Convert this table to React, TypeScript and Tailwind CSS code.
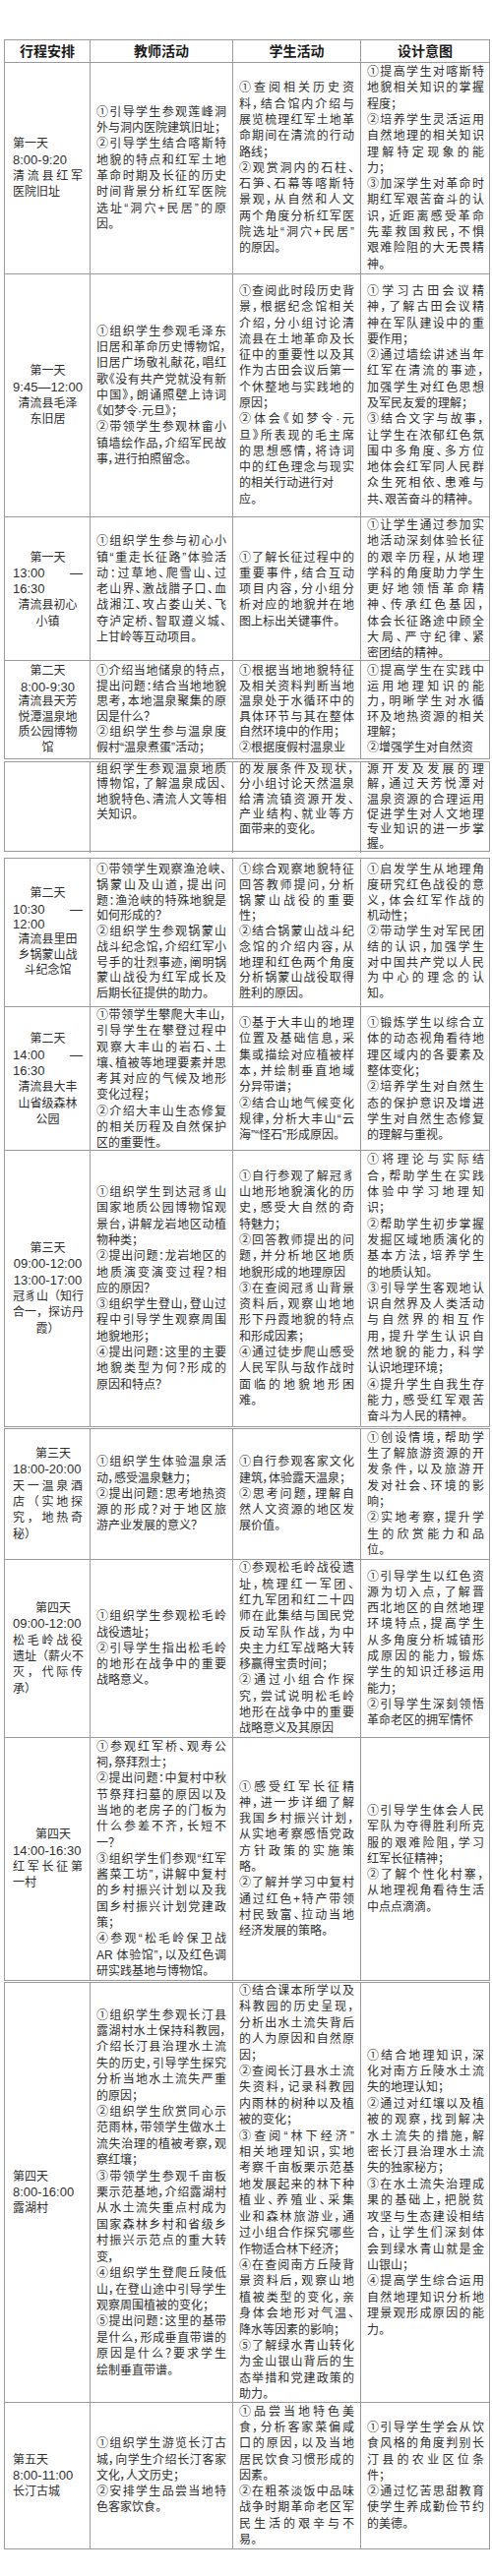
import React from "react";

type Row = {
  h: string;
  lh?: string;
  top?: boolean;
  c1: string[];
  c2: string;
  c3: string;
  c4: string;
};

const circ = /^[①②③④⑤]/;

function Lines({ text }: { text: string }) {
  const lines = text
    .trim()
    .split("\n")
    .map((s) => s.trim())
    .filter((s) => s.length > 0);
  return (
    <>
      {lines.map((raw, i) => {
        let l = raw;
        let noJ = false;
        if (l.endsWith("~")) {
          noJ = true;
          l = l.slice(0, -1);
        }
        const next = lines[i + 1];
        const just = !noJ && next !== undefined && !circ.test(next);
        return (
          <div
            key={i}
            className={
              just
                ? "whitespace-nowrap text-justify [text-align-last:justify]"
                : "whitespace-nowrap text-left"
            }
          >
            {l}
          </div>
        );
      })}
    </>
  );
}

function Col1({ lines }: { lines: string[] }) {
  return (
    <>
      {lines.map((raw, i) => {
        const p = raw[0];
        let cls = "text-left";
        let t = raw;
        if (p === "^") {
          cls = "text-center";
          t = raw.slice(1);
        } else if (p === "=") {
          cls = "text-justify [text-align-last:justify]";
          t = raw.slice(1);
        } else if (p === ">") {
          cls = "text-left pl-[23px]";
          t = raw.slice(1);
        }
        const num = /^[0-9]/.test(t);
        return (
          <div key={i} className={`whitespace-nowrap ${cls} ${num ? "text-[13px]" : ""}`}>
            {t}
          </div>
        );
      })}
    </>
  );
}

const seg1: Row[] = [
  {
    h: "h-[215px]",
    c1: ["第一天", "8:00-9:20", "=清流县红军", "医院旧址"],
    c2: `①引导学生参观莲峰洞
外与洞内医院建筑旧址；
②引导学生结合喀斯特
地貌的特点和红军土地
革命时期及长征的历史
时间背景分析红军医院
选址“洞穴+民居”的原
因。`,
    c3: `①查阅相关历史资
料，结合馆内介绍与
展览梳理红军土地革
命期间在清流的行动
路线；
②观赏洞内的石柱、
石笋、石幕等喀斯特
景观，从自然和人文
两个角度分析红军医
院选址“洞穴+民居”
的原因。`,
    c4: `①提高学生对喀斯特
地貌相关知识的掌握
程度；
②培养学生灵活运用
自然地理的相关知识
理解特定现象的能
力；
③加深学生对革命时
期红军艰苦奋斗的认
识，近距离感受革命
先辈救国救民，不惧
艰难险阻的大无畏精
神。`,
  },
  {
    h: "h-[247px]",
    c1: ["^第一天", "^9:45—12:00", "^清流县毛泽", "^东旧居"],
    c2: `①组织学生参观毛泽东
旧居和革命历史博物馆，
旧居广场敬礼献花，唱红
歌《没有共产党就没有新
中国》，朗诵照壁上诗词
《如梦令·元旦》；
②带领学生参观林畲小
镇墙绘作品，介绍军民故
事，进行拍照留念。`,
    c3: `①查阅此时段历史背
景，根据纪念馆相关
介绍，分小组讨论清
流县在土地革命及长
征中的重要性以及其
作为古田会议后第一
个休整地与实践地的
原因；
②体会《如梦令·元
旦》所表现的毛主席
的思想感情，将诗词
中的红色理念与现实
的相关行动进行对~
应。`,
    c4: `①学习古田会议精
神，了解古田会议精
神在军队建设中的重
要作用；
②通过墙绘讲述当年
红军在清流的事迹，
加强学生对红色思想
及军民友爱的理解；
③结合文字与故事，
让学生在浓郁红色氛
围中多角度、多方位
地体会红军同人民群
众生死相依、患难与
共、艰苦奋斗的精神。`,
  },
  {
    h: "h-[146px]",
    c1: ["^第一天", "=13:00 —", "16:30", "^清流县初心", "^小镇"],
    c2: `①组织学生参与初心小
镇“重走长征路”体验活
动：过草地、爬雪山、过
老山界、激战腊子口、血
战湘江、攻占娄山关、飞
夺泸定桥、智取遵义城、
上甘岭等互动项目。`,
    c3: `①了解长征过程中的
重要事件，结合互动
项目内容，分小组分
析对应的地貌并在地
图上标出关键事件。`,
    c4: `①让学生通过参加实
地活动深刻体验长征
的艰辛历程，从地理
学科的角度助力学生
更好地领悟革命精
神、传承红色基因，
体会长征路途中顾全
大局、严守纪律、紧
密团结的精神。`,
  },
  {
    h: "h-[100px]",
    lh: "leading-[15.5px]",
    c1: ["^第二天", "^8:00-9:30", "^清流县天芳", "^悦潭温泉地", "^质公园博物", "^馆"],
    c2: `①介绍当地储泉的特点，
提出问题：结合当地地貌
思考，本地温泉聚集的原
因是什么？
②组织学生参与温泉度
假村“温泉煮蛋”活动；`,
    c3: `①根据当地地貌特征
及相关资料判断当地
温泉处于水循环中的
具体环节与其在整体
自然环境中的作用；
②根据度假村温泉业`,
    c4: `①提高学生在实践中
运用地理知识的能
力，明晰学生对水循
环及地热资源的相关
理解；
②增强学生对自然资`,
  },
];

const seg2: Row[] = [
  {
    h: "h-[91px]",
    lh: "leading-[15.3px]",
    top: true,
    c1: [],
    c2: `组织学生参观温泉地质
博物馆，了解温泉成因、
地貌特色、清流人文等相
关知识。`,
    c3: `的发展条件及现状，
分小组讨论天然温泉
给清流镇资源开发、
产业结构、就业等方
面带来的变化。`,
    c4: `源开发及发展的理
解，通过天芳悦潭对
温泉资源的合理运用
促进学生对人文地理
专业知识的进一步掌
握。`,
  },
];

const seg3: Row[] = [
  {
    h: "h-[151px]",
    lh: "leading-[15.7px]",
    c1: ["^第二天", "=10:30 —", "12:00", "^清流县里田", "^乡锅蒙山战", "^斗纪念馆"],
    c2: `①带领学生观察渔沧峡、
锅蒙山及山道，提出问
题：渔沧峡的特殊地貌是
如何形成的？
②组织学生参观锅蒙山
战斗纪念馆，介绍红军小
号手的壮烈事迹，阐明锅
蒙山战役为红军成长及
后期长征提供的助力。`,
    c3: `①综合观察地貌特征
回答教师提问，分析
锅蒙山战役的重要
性；
②结合锅蒙山战斗纪
念馆的介绍内容，从
地理和红色两个角度
分析锅蒙山战役取得
胜利的原因。`,
    c4: `①启发学生从地理角
度研究红色战役的意
义，体会红军作战的
机动性；
②带动学生对军民团
结的认识，加强学生
对中国共产党以人民
为中心的理念的认
知。`,
  },
  {
    h: "h-[146px]",
    c1: ["^第二天", "=14:00 —", "16:30", "^清流县大丰", "^山省级森林", "^公园"],
    c2: `①带领学生攀爬大丰山，
引导学生在攀登过程中
观察大丰山的岩石、土
壤、植被等地理要素并思
考其对应的气候及地形
变化过程；
②介绍大丰山生态修复
的相关历程及自然保护
区的重要性。`,
    c3: `①基于大丰山的地理
位置及基础信息，采
集或描绘对应植被样
本，并绘制垂直地域
分异带谱；
②结合山地气候变化
规律，分析大丰山“云
海”“怪石”形成原因。`,
    c4: `①锻炼学生以综合立
体的动态视角看待地
理区域内的各要素及
整体变化；
②培养学生对自然生
态的保护意识及增进
学生对自然生态修复
的理解与重视。`,
  },
  {
    h: "h-[281px]",
    c1: ["^第三天", "^09:00-12:00", "^13:00-17:00", "=冠豸山（知行", "=合一，探访丹", "^霞）"],
    c2: `①组织学生到达冠豸山
国家地质公园博物馆观
景台，讲解龙岩地区动植
物种类；
②提出问题：龙岩地区的
地质演变演变过程？相
应的原因？
③组织学生登山，登山过
程中引导学生观察周围
地貌地形；
④提出问题：这里的主要
地貌类型为何？形成的
原因和特点？`,
    c3: `①自行参观了解冠豸
山地形地貌演化的历
史，感受大自然的奇
特魅力；
②回答教师提出的问
题，并分析地区地质
地貌形成的地理原因
③在查阅冠豸山背景
资料后，观察山地地
形下丹霞地貌的特点
和形成因素；
④通过徒步爬山感受
人民军队与敌作战时
面临的地貌地形困
难。`,
    c4: `①将理论与实际结
合，帮助学生在实践
体验中学习地理知
识；
②帮助学生初步掌握
发掘区域地质演化的
基本方法，培养学生
的地质认知。
③引导学生客观地认
识自然界及人类活动
与自然界的相互作
用，提升学生认识自
然地貌的能力，科学
认识地理环境；
④提升学生自我生存
能力，感受红军艰苦
奋斗为人民的精神。`,
  },
];

const seg4: Row[] = [
  {
    h: "h-[133px]",
    c1: [">第三天", "18:00-20:00", "=天一温泉酒", "=店（实地探", "=究，地热奇", "秘）"],
    c2: `①组织学生体验温泉活
动，感受温泉魅力；
②提出问题：思考地热资
源的形成？对于地区旅
游产业发展的意义？`,
    c3: `①自行参观客家文化
建筑，体验露天温泉；
②思考问题，理解自
然人文资源的地区发
展价值。`,
    c4: `①创设情境，帮助学
生了解旅游资源的开
发条件，以及旅游开
发对社会、环境的影
响；
②实地考察，提升学
生的欣赏能力和品
位。`,
  },
  {
    h: "h-[181px]",
    c1: [">第四天", "09:00-12:00", "=松毛岭战役", "=遗址（薪火不", "=灭，代际传", "承）"],
    c2: `①组织学生参观松毛岭
战役遗址；
②引导学生指出松毛岭
的地形在战争中的重要
战略意义。`,
    c3: `①参观松毛岭战役遗
址，梳理红一军团、
红九军团和红二十四
师在此集结与国民党
反动军队作战，为中
央主力红军战略大转
移赢得宝贵时间；
②通过小组合作探
究，尝试说明松毛岭
地形在战争中的重要
战略意义及其原因`,
    c4: `①引导学生以红色资
源为切入点，了解晋
西北地区的自然地理
环境特点，提高学生
从多角度分析城镇形
成原因的能力，锻炼
学生的知识迁移运用
能力；
②引导学生深刻领悟
革命老区的拥军情怀`,
  },
  {
    h: "h-[247px]",
    c1: [">第四天", "14:00-16:30", "=红军长征第", "一村"],
    c2: `①参观红军桥、观寿公
祠，祭拜烈士；
②提出问题：中复村中秋
节祭拜扫墓的原因以及
当地的老房子的门板为
什么参差不齐，长短不
一？
③组织学生们参观“红军
酱菜工坊”，讲解中复村
的乡村振兴计划以及我
国乡村振兴计划党建政
策；
④参观“松毛岭保卫战
AR 体验馆”，以及红色调
研实践基地与博物馆。`,
    c3: `①感受红军长征精
神，进一步详细了解
我国乡村振兴计划，
从实地考察感悟党政
方针政策的实施策
略。
②了解并学习中复村
通过红色+特产带领
村民致富、拉动当地
经济发展的策略。`,
    c4: `①引导学生体会人民
军队为夺得胜利所克
服的艰难险阻，学习
红军长征精神；
②了解个性化村寨，
从地理视角看待生活
中点点滴滴。`,
  },
];

const seg5: Row[] = [
  {
    h: "h-[427px]",
    lh: "leading-[16.4px]",
    c1: ["第四天", "8:00-16:00", "露湖村"],
    c2: `①组织学生参观长汀县
露湖村水土保持科教园，
介绍长汀县治理水土流
失的历史，引导学生探究
分析当地水土流失严重
的原因；
②组织学生欣赏同心示
范雨林，带领学生做水土
流失治理的植被考察，观
察红壤；
③带领学生参观千亩板
栗示范基地，介绍露湖村
从水土流失重点村成为
国家森林乡村和省级乡
村振兴示范点的重大转
变，
④组织学生登爬丘陵低
山，在登山途中引导学生
观察周围植被的变化；
⑤提出问题：这里的基带
是什么，形成垂直带谱的
原因是什么？要求学生
绘制垂直带谱。`,
    c3: `①结合课本所学以及
科教园的历史呈现，
分析出水土流失背后
的人为原因和自然原
因；
②查阅长汀县水土流
失资料，记录科教园
内雨林的树种以及植
被的变化；
③查阅“林下经济”
相关地理知识，实地
考察千亩板栗示范基
地发展起来的林下种
植业、养殖业、采集
业和森林旅游业，通
过小组合作探究哪些
作物适合林下经济；
④在查阅南方丘陵背
景资料后，观察山地
植被类型的变化，亲
身体会地形对气温、
降水等因素的影响；
⑤了解绿水青山转化
为金山银山背后的生
态举措和党建政策的
助力。`,
    c4: `①结合地理知识，深
化对南方丘陵水土流
失的地理认知；
②通过对红壤以及植
被的观察，找到解决
水土流失的措施，解
密长汀县治理水土流
失的独家秘方；
③在水土流失治理成
果的基础上，把脱贫
攻坚与生态建设相结
合，让学生们深刻体
会到绿水青山就是金
山银山；
④提高学生综合运用
自然地理知识分析地
理景观形成原因的能
力。`,
  },
  {
    h: "h-[149px]",
    c1: ["第五天", "8:00-11:00", "长汀古城"],
    c2: `①组织学生游览长汀古
城，向学生介绍长汀客家
文化，人文历史；
②安排学生品尝当地特
色客家饮食。`,
    c3: `①品尝当地特色美
食，分析客家菜偏咸
口的原因，以及当地
居民饮食习惯形成的
因素。
②在粗茶淡饭中品味
战争时期革命老区军
民生活的艰辛与不
易。`,
    c4: `①引导学生学会从饮
食风格的角度判别长
汀县的农业区位条
件；
②通过忆苦思甜教育
使学生养成勤俭节约
的美德。`,
  },
];

function TableRow({ r }: { r: Row }) {
  const v = r.top ? "justify-start" : "justify-center";
  const lh = r.lh ?? "leading-[16.3px]";
  return (
    <div className={`grid grid-cols-[87px_145px_130px_1fr] border-b border-[#9a9a9a] ${r.h} ${lh}`}>
      <div className={`flex flex-col ${v} border-r border-[#9a9a9a] pl-[8px] pr-[7px]`}>
        <Col1 lines={r.c1} />
      </div>
      <div className={`flex flex-col ${v} border-r border-[#9a9a9a] px-[6px] [font-feature-settings:'palt']`}>
        <Lines text={r.c2} />
      </div>
      <div className={`flex flex-col ${v} border-r border-[#9a9a9a] px-[6px] [font-feature-settings:'palt']`}>
        <Lines text={r.c3} />
      </div>
      <div className={`flex flex-col ${v} pl-[6px] pr-[5px] [font-feature-settings:'palt']`}>
        <Lines text={r.c4} />
      </div>
    </div>
  );
}

function Segment({ rows, header, className }: { rows: Row[]; header?: boolean; className?: string }) {
  return (
    <div className={`border-t border-l border-r border-[#9a9a9a] ${className ?? ""}`}>
      {header && (
        <div className="grid grid-cols-[87px_145px_130px_1fr] h-[23px] border-b border-[#9a9a9a] text-[14px] font-bold leading-[22px] text-[#1a1a1a]">
          <div className="border-r border-[#9a9a9a] text-center">行程安排</div>
          <div className="border-r border-[#9a9a9a] text-center">教师活动</div>
          <div className="border-r border-[#9a9a9a] text-center">学生活动</div>
          <div className="text-center">设计意图</div>
        </div>
      )}
      {rows.map((r, i) => (
        <TableRow key={i} r={r} />
      ))}
    </div>
  );
}

export default function App() {
  return (
    <div className="w-[500px] min-h-[2619px] bg-white pt-[40px] pl-[4px] pr-[2px] font-['Liberation_Sans','Noto_Sans_CJK_SC',sans-serif] text-[12px] text-[#2e2e2e]">
      <Segment rows={seg1} header />
      <Segment rows={seg2} className="mt-[2px]" />
      <Segment rows={seg3} className="mt-[6px]" />
      <Segment rows={seg4} className="mt-[1px]" />
      <Segment rows={seg5} className="mt-[1px]" />
    </div>
  );
}
